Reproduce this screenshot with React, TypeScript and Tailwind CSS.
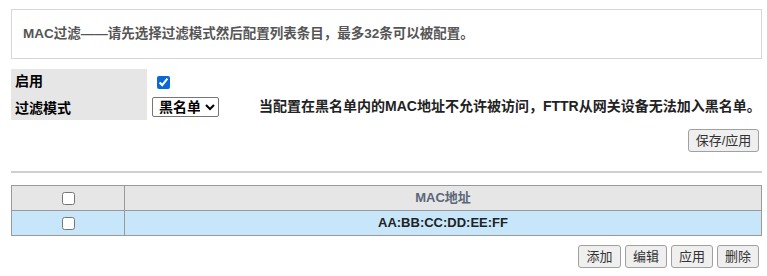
import React, { useState } from 'react';

const font = { fontFamily: '"Liberation Sans", Arial, "Noto Sans CJK SC", sans-serif' };

const Btn: React.FC<{ label: string; className?: string }> = ({ label, className = '' }) => (
  <button
    className={`h-[23px] rounded-[3px] border border-[#a0a0a0] bg-[#efefef] text-[13px] text-[#333] hover:bg-[#e5e5e5] ${className}`}
  >
    {label}
  </button>
);

const App: React.FC = () => {
  const [enabled, setEnabled] = useState(true);
  const [mode, setMode] = useState('black');

  return (
    <div className="w-[767px] h-[276px] bg-white text-[13px] text-black" style={font}>
      <div className="pl-[11px] pr-[5px] pt-[9px]">
        <div className="h-[50px] border border-[#d6d6d6] flex items-center pl-[11px] text-[13.5px] text-[#555] font-semibold">
          MAC过滤——请先选择过滤模式然后配置列表条目，最多32条可以被配置。
        </div>

        <div className="mt-[10px] flex">
          <div className="w-[136px] h-[51px] bg-[#e6e6e6] flex flex-col justify-center gap-[6px] pl-[4px] text-[14px] font-bold">
            <div>启用</div>
            <div>过滤模式</div>
          </div>
          <div className="flex flex-col pl-[5px] pt-[7px]">
            <input
              type="checkbox"
              checked={enabled}
              onChange={(e) => setEnabled(e.target.checked)}
              className="ml-[5px] w-[13px] h-[13px] accent-[#0b68d8]"
            />
            <div className="flex items-center mt-[7px]">
              <select
                value={mode}
                onChange={(e) => setMode(e.target.value)}
                className="h-[20px] w-[67px] border border-[#767676] rounded-[2px] bg-white font-bold text-[14px] leading-none px-[2px]"
              >
                <option value="black">黑名单</option>
                <option value="white">白名单</option>
              </select>
              <span className="ml-[40px] text-[14px] font-bold text-[#222]">
                当配置在黑名单内的MAC地址不允许被访问，FTTR从网关设备无法加入黑名单。
              </span>
            </div>
          </div>
        </div>

        <div className="flex justify-end mt-[9px] pr-[3px]">
          <Btn label="保存/应用" className="w-[71px]" />
        </div>

        <div className="mt-[19px] h-[2px] bg-[#cfcfcf]" />

        <table className="mt-[12px] w-full border-collapse">
          <tbody>
            <tr className="h-[25px] bg-[#e6e6e6]">
              <td className="w-[113px] border border-[#9a9a9a] text-center align-middle">
                <input type="checkbox" className="w-[13px] h-[13px] align-middle" />
              </td>
              <td className="border border-[#9a9a9a] text-center font-semibold text-[#5b6679]">MAC地址</td>
            </tr>
            <tr className="h-[25px] bg-[#c8e6fa]">
              <td className="border border-[#9a9a9a] text-center align-middle">
                <input type="checkbox" className="w-[13px] h-[13px] align-middle" />
              </td>
              <td className="border border-[#9a9a9a] text-center font-bold text-[#222]">AA:BB:CC:DD:EE:FF</td>
            </tr>
          </tbody>
        </table>

        <div className="flex justify-end gap-[4px] mt-[9px] pr-[3px]">
          <Btn label="添加" className="w-[43px]" />
          <Btn label="编辑" className="w-[42px]" />
          <Btn label="应用" className="w-[42px]" />
          <Btn label="删除" className="w-[42px]" />
        </div>
      </div>
    </div>
  );
};

export default App;
